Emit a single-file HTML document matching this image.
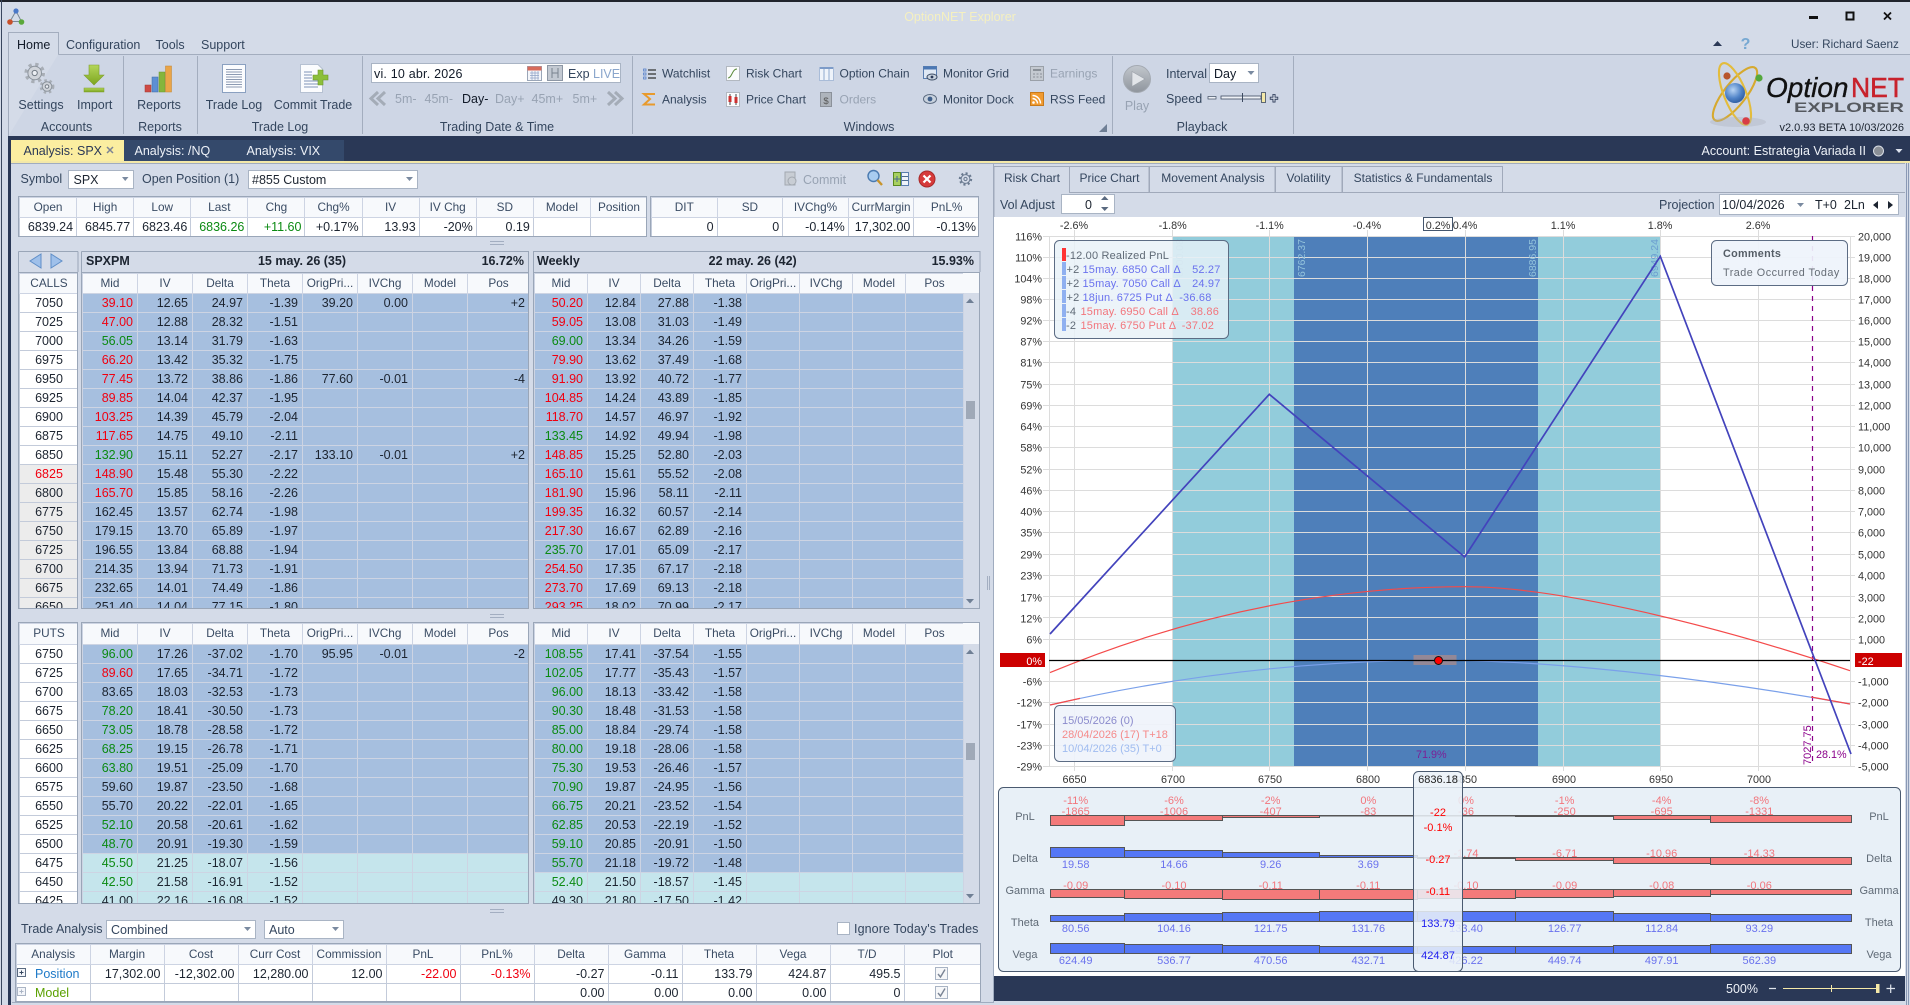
<!DOCTYPE html>
<html><head><meta charset="utf-8"><title>OptionNET Explorer</title>
<style>
html,body{margin:0;padding:0;width:1910px;height:1005px;overflow:hidden;background:#d4dbe8}
body{position:relative;font:12.5px "Liberation Sans",sans-serif}
.w{position:absolute;box-sizing:border-box;border:1px solid #9aa6b8;overflow:hidden;background:#d4dbe8}
table{border-collapse:collapse;table-layout:fixed;font-size:12.5px}
td,th{box-sizing:border-box;border:1px solid #cdd4e3;height:19px;padding:0 4px 0 0;text-align:right;overflow:hidden;white-space:nowrap;line-height:17px;color:#1c2430;background:#a6bfdf;font-weight:normal}
th{height:20px;text-align:center;background:#f7f9fc;color:#3a4c64;padding:0 0 1px;font-size:11.8px}
.h th{height:21px}
tr.t td{background:#c5e5ec}
.s td{background:#fff;text-align:center;padding:0;border-color:#c3cbda}
.s tr.y td{background:#ececec}
.p td{background:#fff;border-color:#c3cbda;padding-right:3px}
.r{color:#f00010}.g{color:#0b8a12}
td.l{text-align:left;padding-left:18px;position:relative}
svg{position:absolute;left:0;top:0}
svg text{font:12.5px "Liberation Sans",sans-serif;fill:#34465e}
svg .m{text-anchor:middle}svg .e{text-anchor:end}
svg .d{fill:#98a3b3}
svg .c text,svg text.c{font-size:10.8px;fill:#333}
svg .f text{font-size:11px}
svg .n text{font-size:12px}
svg .rd text{fill:#f2757c}svg .bl text{fill:#6a72ee}svg .gy text{fill:#5f6a76}
svg .ls text{letter-spacing:.18px}
</style></head><body>

<div class="w" style="left:18px;top:196px;width:629px;height:41px"><table class="p" style="width:628px"><col span="11" style="width:57.1px">
<tr><th>Open<th>High<th>Low<th>Last<th>Chg<th>Chg%<th>IV<th>IV Chg<th>SD<th>Model<th>Position</tr>
<tr><td>6839.24<td>6845.77<td>6823.46<td class="g">6836.26<td class="g">+11.60<td>+0.17%<td>13.93<td>-20%<td>0.19<td><td></tr></table></div>

<div class="w" style="left:650px;top:196px;width:329px;height:41px"><table class="p" style="width:328px"><col span="5" style="width:65.6px">
<tr><th>DIT<th>SD<th>IVChg%<th>CurrMargin<th>PnL%</tr>
<tr><td>0<td>0<td>-0.14%<td>17,302.00<td>-0.13%</tr></table></div>

<div class="w" style="left:18px;top:272px;width:60px;height:337px"><table class="s" style="width:59px"><col style="width:59px">
<tr><th>CALLS</tr>
<tr><td>7050</tr><tr><td>7025</tr><tr><td>7000</tr><tr><td>6975</tr><tr><td>6950</tr><tr><td>6925</tr><tr><td>6900</tr><tr><td>6875</tr><tr><td>6850</tr>
<tr class="y"><td class="r">6825</tr><tr class="y"><td>6800</tr><tr class="y"><td>6775</tr><tr class="y"><td>6750</tr><tr class="y"><td>6725</tr><tr class="y"><td>6700</tr><tr class="y"><td>6675</tr><tr class="y"><td>6650</tr></table></div>

<div class="w" style="left:81px;top:272px;width:448px;height:337px"><table style="width:447px"><col span="7" style="width:55px"><col style="width:62px">
<tr><th>Mid<th>IV<th>Delta<th>Theta<th>OrigPri...<th>IVChg<th>Model<th>Pos</tr>
<tr><td class="r">39.10<td>12.65<td>24.97<td>-1.39<td>39.20<td>0.00<td><td>+2</tr>
<tr><td class="r">47.00<td>12.88<td>28.32<td>-1.51<td><td><td><td></tr>
<tr><td class="g">56.05<td>13.14<td>31.79<td>-1.63<td><td><td><td></tr>
<tr><td class="r">66.20<td>13.42<td>35.32<td>-1.75<td><td><td><td></tr>
<tr><td class="r">77.45<td>13.72<td>38.86<td>-1.86<td>77.60<td>-0.01<td><td>-4</tr>
<tr><td class="r">89.85<td>14.04<td>42.37<td>-1.95<td><td><td><td></tr>
<tr><td class="r">103.25<td>14.39<td>45.79<td>-2.04<td><td><td><td></tr>
<tr><td class="r">117.65<td>14.75<td>49.10<td>-2.11<td><td><td><td></tr>
<tr><td class="g">132.90<td>15.11<td>52.27<td>-2.17<td>133.10<td>-0.01<td><td>+2</tr>
<tr><td class="r">148.90<td>15.48<td>55.30<td>-2.22<td><td><td><td></tr>
<tr><td class="r">165.70<td>15.85<td>58.16<td>-2.26<td><td><td><td></tr>
<tr><td>162.45<td>13.57<td>62.74<td>-1.98<td><td><td><td></tr>
<tr><td>179.15<td>13.70<td>65.89<td>-1.97<td><td><td><td></tr>
<tr><td>196.55<td>13.84<td>68.88<td>-1.94<td><td><td><td></tr>
<tr><td>214.35<td>13.94<td>71.73<td>-1.91<td><td><td><td></tr>
<tr><td>232.65<td>14.01<td>74.49<td>-1.86<td><td><td><td></tr>
<tr><td>251.40<td>14.04<td>77.15<td>-1.80<td><td><td><td></tr></table></div>

<div class="w" style="left:533px;top:272px;width:447px;height:337px"><div style="position:absolute;left:429px;top:0;width:18px;height:20px;background:#f7f9fc"></div><table style="width:429px"><col span="7" style="width:53px"><col style="width:58px">
<tr><th>Mid<th>IV<th>Delta<th>Theta<th>OrigPri...<th>IVChg<th>Model<th>Pos</tr>
<tr><td class="r">50.20<td>12.84<td>27.88<td>-1.38<td><td><td><td></tr>
<tr><td class="r">59.05<td>13.08<td>31.03<td>-1.49<td><td><td><td></tr>
<tr><td class="g">69.00<td>13.34<td>34.26<td>-1.59<td><td><td><td></tr>
<tr><td class="r">79.90<td>13.62<td>37.49<td>-1.68<td><td><td><td></tr>
<tr><td class="r">91.90<td>13.92<td>40.72<td>-1.77<td><td><td><td></tr>
<tr><td class="r">104.85<td>14.24<td>43.89<td>-1.85<td><td><td><td></tr>
<tr><td class="r">118.70<td>14.57<td>46.97<td>-1.92<td><td><td><td></tr>
<tr><td class="g">133.45<td>14.92<td>49.94<td>-1.98<td><td><td><td></tr>
<tr><td class="r">148.85<td>15.25<td>52.80<td>-2.03<td><td><td><td></tr>
<tr><td class="r">165.10<td>15.61<td>55.52<td>-2.08<td><td><td><td></tr>
<tr><td class="r">181.90<td>15.96<td>58.11<td>-2.11<td><td><td><td></tr>
<tr><td class="r">199.35<td>16.32<td>60.57<td>-2.14<td><td><td><td></tr>
<tr><td class="r">217.30<td>16.67<td>62.89<td>-2.16<td><td><td><td></tr>
<tr><td class="g">235.70<td>17.01<td>65.09<td>-2.17<td><td><td><td></tr>
<tr><td class="r">254.50<td>17.35<td>67.17<td>-2.18<td><td><td><td></tr>
<tr><td class="r">273.70<td>17.69<td>69.13<td>-2.18<td><td><td><td></tr>
<tr><td class="r">293.25<td>18.02<td>70.99<td>-2.17<td><td><td><td></tr></table></div>

<div class="w h" style="left:18px;top:622px;width:60px;height:282px"><table class="s" style="width:59px"><col style="width:59px">
<tr><th>PUTS</tr>
<tr><td>6750</tr><tr><td>6725</tr><tr><td>6700</tr><tr><td>6675</tr><tr><td>6650</tr><tr><td>6625</tr><tr><td>6600</tr><tr><td>6575</tr><tr><td>6550</tr><tr><td>6525</tr><tr><td>6500</tr><tr><td>6475</tr><tr><td>6450</tr><tr><td>6425</tr></table></div>

<div class="w h" style="left:81px;top:622px;width:448px;height:282px"><table style="width:447px"><col span="7" style="width:55px"><col style="width:62px">
<tr><th>Mid<th>IV<th>Delta<th>Theta<th>OrigPri...<th>IVChg<th>Model<th>Pos</tr>
<tr><td class="g">96.00<td>17.26<td>-37.02<td>-1.70<td>95.95<td>-0.01<td><td>-2</tr>
<tr><td class="r">89.60<td>17.65<td>-34.71<td>-1.72<td><td><td><td></tr>
<tr><td>83.65<td>18.03<td>-32.53<td>-1.73<td><td><td><td></tr>
<tr><td class="g">78.20<td>18.41<td>-30.50<td>-1.73<td><td><td><td></tr>
<tr><td class="g">73.05<td>18.78<td>-28.58<td>-1.72<td><td><td><td></tr>
<tr><td class="g">68.25<td>19.15<td>-26.78<td>-1.71<td><td><td><td></tr>
<tr><td class="g">63.80<td>19.51<td>-25.09<td>-1.70<td><td><td><td></tr>
<tr><td>59.60<td>19.87<td>-23.50<td>-1.68<td><td><td><td></tr>
<tr><td>55.70<td>20.22<td>-22.01<td>-1.65<td><td><td><td></tr>
<tr><td class="g">52.10<td>20.58<td>-20.61<td>-1.62<td><td><td><td></tr>
<tr><td class="g">48.70<td>20.91<td>-19.30<td>-1.59<td><td><td><td></tr>
<tr class="t"><td class="g">45.50<td>21.25<td>-18.07<td>-1.56<td><td><td><td></tr>
<tr class="t"><td class="g">42.50<td>21.58<td>-16.91<td>-1.52<td><td><td><td></tr>
<tr class="t"><td>41.00<td>22.16<td>-16.08<td>-1.52<td><td><td><td></tr></table></div>

<div class="w h" style="left:533px;top:622px;width:447px;height:282px"><div style="position:absolute;left:429px;top:0;width:18px;height:21px;background:#f7f9fc"></div><table style="width:429px"><col span="7" style="width:53px"><col style="width:58px">
<tr><th>Mid<th>IV<th>Delta<th>Theta<th>OrigPri...<th>IVChg<th>Model<th>Pos</tr>
<tr><td class="g">108.55<td>17.41<td>-37.54<td>-1.55<td><td><td><td></tr>
<tr><td class="g">102.05<td>17.77<td>-35.43<td>-1.57<td><td><td><td></tr>
<tr><td class="g">96.00<td>18.13<td>-33.42<td>-1.58<td><td><td><td></tr>
<tr><td class="g">90.30<td>18.48<td>-31.53<td>-1.58<td><td><td><td></tr>
<tr><td class="g">85.00<td>18.84<td>-29.74<td>-1.58<td><td><td><td></tr>
<tr><td class="g">80.00<td>19.18<td>-28.06<td>-1.58<td><td><td><td></tr>
<tr><td class="g">75.30<td>19.53<td>-26.46<td>-1.57<td><td><td><td></tr>
<tr><td class="g">70.90<td>19.87<td>-24.95<td>-1.56<td><td><td><td></tr>
<tr><td class="g">66.75<td>20.21<td>-23.52<td>-1.54<td><td><td><td></tr>
<tr><td class="g">62.85<td>20.53<td>-22.19<td>-1.52<td><td><td><td></tr>
<tr><td class="g">59.10<td>20.85<td>-20.91<td>-1.50<td><td><td><td></tr>
<tr><td class="g">55.70<td>21.18<td>-19.72<td>-1.48<td><td><td><td></tr>
<tr class="t"><td class="g">52.40<td>21.50<td>-18.57<td>-1.45<td><td><td><td></tr>
<tr class="t"><td>49.30<td>21.80<td>-17.50<td>-1.42<td><td><td><td></tr></table></div>

<div class="w" style="left:15px;top:943px;width:966px;height:59px"><table class="p" style="width:965px"><col style="width:73.5px"><col span="11" style="width:74px"><col style="width:77.5px">
<tr><th>Analysis<th>Margin<th>Cost<th>Curr Cost<th>Commission<th>PnL<th>PnL%<th>Delta<th>Gamma<th>Theta<th>Vega<th>T/D<th>Plot</tr>
<tr><td class="l" style="color:#1e7ac8">Position<td>17,302.00<td>-12,302.00<td>12,280.00<td>12.00<td class="r">-22.00<td class="r">-0.13%<td>-0.27<td>-0.11<td>133.79<td>424.87<td>495.5<td></tr>
<tr><td class="l" style="color:#5aa000">Model<td><td><td><td><td><td><td>0.00<td>0.00<td>0.00<td>0.00<td>0<td></tr></table></div>

<svg width="1910" height="1005" viewBox="0 0 1910 1005">
<defs>
<linearGradient id="ga" x1="0" y1="0" x2="0" y2="1"><stop offset="0" stop-color="#b4d65a"/><stop offset="1" stop-color="#7ca51e"/></linearGradient>
<linearGradient id="gp" x1="0" y1="0" x2="0" y2="1"><stop offset="0" stop-color="#c2c7cd"/><stop offset="1" stop-color="#8f959d"/></linearGradient>
<radialGradient id="gs" cx=".4" cy=".35" r=".7"><stop offset="0" stop-color="#b8d4f4"/><stop offset=".6" stop-color="#4f83c8"/><stop offset="1" stop-color="#2c5a9c"/></radialGradient>
</defs>

<!-- window frame -->
<rect x="0" y="0" width="1910" height="2" fill="#20242c"/>
<rect x="1" y="0" width="1" height="1005" fill="#39465e"/>
<rect x="8" y="55" width="1902" height="81" fill="#ced6e5"/>
<path d="M58 54.5H1910" stroke="#a3adbe" fill="none"/>
<path d="M8.5 136V32.5H58.5V54" stroke="#a3adbe" fill="#d4dbe8"/>
<path d="M123.5 56V134M197.5 56V134M362.5 56V134M632.5 56V134M1112.5 56V134M1293.5 56V134" stroke="#a3adbe" fill="none"/>
<rect x="8" y="136" width="1902" height="25" fill="#2a3856"/>
<rect x="8" y="161" width="1902" height="2" fill="#f3e8a8"/>
<rect x="8" y="136" width="3" height="869" fill="#2a3856"/>
<rect x="1906" y="163" width="1" height="842" fill="#8a99b5"/>
<rect x="1908" y="163" width="1" height="842" fill="#8a99b5"/>
<path d="M11 163.5H1905M993.5 163V1003M12 1002.5H993" stroke="#a0acbf" fill="none"/>

<!-- title -->
<g stroke="#7a8794" stroke-width="1" fill="none"><path d="M16 11L10 21.5H21.5Z"/></g>
<circle cx="16" cy="11" r="2.6" fill="#4a78c8"/><circle cx="10" cy="22" r="2.8" fill="#c8502a"/><circle cx="21.5" cy="22" r="2.8" fill="#5aa83a"/>
<text x="960" y="21" class="m" style="fill:#f5f0c0;font-size:12.5px">OptionNET Explorer</text>
<rect x="1809" y="16" width="9" height="3" fill="#111"/>
<rect x="1846.5" y="12.5" width="7" height="7" fill="none" stroke="#111" stroke-width="2"/>
<path d="M1884 12.5L1891 19.5M1891 12.5L1884 19.5" stroke="#111" stroke-width="1.8"/>
<text x="17" y="49" style="fill:#111a28">Home</text><text x="66" y="49">Configuration</text><text x="155.5" y="49">Tools</text><text x="201" y="49">Support</text>
<path d="M1713 46L1717.5 41L1722 46Z" fill="#2a3856"/>
<text x="1745.5" y="49" class="m" style="font-size:16px;font-weight:bold;fill:#76a8d2">?</text>
<text x="1791" y="48" style="font-size:11.7px">User: Richard Saenz</text>

<!-- settings icon -->
<g><circle cx="34.7" cy="73" r="8.6" fill="none" stroke="#a8aeb6" stroke-width="3.4" stroke-dasharray="3.2 3.6"/><circle cx="34.7" cy="73" r="6.8" fill="#d0d4da" stroke="#8c949d"/><circle cx="34.7" cy="73" r="2.6" fill="#eceff3" stroke="#737b85"/>
<circle cx="47" cy="86.5" r="6" fill="none" stroke="#a8aeb6" stroke-width="2.8" stroke-dasharray="2.4 2.7"/><circle cx="47" cy="86.5" r="4.8" fill="#d0d4da" stroke="#8c949d"/><circle cx="47" cy="86.5" r="1.8" fill="#eceff3" stroke="#737b85"/></g>
<!-- import -->
<path d="M89 65H99V75H104L94 85L84 75H89Z" fill="url(#ga)" stroke="#7d9d2a" stroke-width=".6"/>
<rect x="84" y="88" width="20" height="4" fill="url(#ga)" stroke="#7d9d2a" stroke-width=".5"/>
<!-- reports -->
<rect x="145" y="85" width="6" height="7" fill="#cf4a44" stroke="#9b3a34" stroke-width=".5"/>
<rect x="152" y="77" width="6" height="15" fill="#5d8fd4" stroke="#3f6aa6" stroke-width=".5"/>
<rect x="159" y="72" width="6" height="20" fill="#85b53c" stroke="#6b962c" stroke-width=".5"/>
<rect x="165.5" y="66" width="6" height="26" fill="#eaa548" stroke="#c2842e" stroke-width=".5"/>
<!-- trade log -->
<rect x="222.5" y="64.5" width="23" height="28" fill="#fbfcfe" stroke="#8aa0c0"/>
<path d="M226 69.5H242M226 72H242M226 74.5H242M226 77H242M226 79.5H242M226 82H242M226 84.5H242M226 87H242" stroke="#8c9ab2"/>
<!-- commit -->
<path d="M300.5 64.5H318L322.5 69V92.5H300.5Z" fill="#fbfcfe" stroke="#b6c1d2"/>
<path d="M304 72H312M304 75H312M304 78H312M304 81H318M304 84H318M304 87H318" stroke="#7f93b8"/>
<path d="M318 70h5v5h5v5h-5v5h-5v-5h-5v-5h5Z" fill="#8cbf3a" stroke="#6a962a" stroke-width=".6"/>

<g class="l">
<text x="41" y="109" class="m">Settings</text><text x="94.7" y="109" class="m">Import</text><text x="159" y="109" class="m">Reports</text><text x="234" y="109" class="m">Trade Log</text><text x="313" y="109" class="m">Commit Trade</text>
<text x="66.5" y="131" class="m">Accounts</text><text x="160" y="131" class="m">Reports</text><text x="280" y="131" class="m">Trade Log</text><text x="497" y="131" class="m">Trading Date &amp; Time</text><text x="869" y="131" class="m">Windows</text><text x="1202" y="131" class="m">Playback</text>
</g>

<!-- date -->
<rect x="371.5" y="63.5" width="249" height="19" fill="#fff" stroke="#a9b4c4"/>
<text x="374" y="78" style="fill:#111a28;letter-spacing:.2px">vi. 10 abr. 2026</text>
<rect x="527.5" y="66.5" width="14" height="14" fill="#f4f6fa" stroke="#9aa6b8"/><rect x="527.5" y="66.5" width="14" height="4" fill="#d86a5a"/>
<path d="M530 73H539M530 75.5H539M530 78H539M532 71V80M535 71V80M538 71V80" stroke="#8ea3c6" stroke-width=".7"/>
<rect x="547.5" y="65.5" width="15" height="15" fill="#c3c9d2" stroke="#8d97a5"/>
<path d="M552 68V78M558 68V78M552 73H558" stroke="#79828f"/>
<text x="568" y="78">Exp</text><text x="593" y="78" style="fill:#8aa6cc">LIVE</text>
<path d="M378 92L371 98.5L378 105M385 92L378 98.5L385 105" stroke="#a4acb7" stroke-width="3" fill="none"/>
<path d="M608 92L615 98.5L608 105M615 92L622 98.5L615 105" stroke="#a4acb7" stroke-width="3" fill="none"/>
<g class="d"><text x="395" y="103" class="d">5m-</text><text x="424.5" y="103" class="d">45m-</text><text x="495" y="103" class="d">Day+</text><text x="531.5" y="103" class="d">45m+</text><text x="572.5" y="103" class="d">5m+</text></g>
<text x="462" y="103" style="fill:#111a28">Day-</text>

<!-- windows group -->
<path d="M648 70H656M648 74H656M648 78H656" stroke="#333" stroke-width="1.2"/><path d="M643.5 69H646V71H643.5ZM643.5 73H646V75H643.5ZM643.5 77H646V79H643.5Z" fill="none" stroke="#4a78c8" stroke-width=".7"/>
<path d="M655 94H644L650 99L644 104.5H655" fill="none" stroke="#e89a2c" stroke-width="2"/>
<rect x="726.5" y="66.5" width="13" height="14" fill="#fafbfd" stroke="#b2b8c0"/><path d="M728 78C732 78 732 69 737 69" stroke="#5a8a3a" fill="none"/>
<rect x="726.5" y="92.5" width="13" height="14" fill="#fafbfd" stroke="#b2b8c0"/><path d="M730 94V105M736 94V105" stroke="#444"/><rect x="728.5" y="96" width="3" height="6" fill="#cc3030"/><rect x="734.5" y="97" width="3" height="6" fill="#cc3030"/>
<rect x="819.5" y="67.5" width="14" height="13" fill="#eef3fa" stroke="#a9bcd8"/><path d="M824 68V80M829 68V80" stroke="#8ea9cf"/><path d="M820 68H833" stroke="#7d9bc8" stroke-width="2"/>
<rect x="820.5" y="92.5" width="11" height="14" fill="#aeb4bc" stroke="#8b919a"/><text x="826" y="104" class="m" style="font-size:9.5px;fill:#555">$</text>
<rect x="923.5" y="66.5" width="13" height="12" fill="#dfe8f4" stroke="#5a7eb0"/><rect x="923.5" y="66.5" width="13" height="3" fill="#4c78b4"/><ellipse cx="932" cy="77" rx="5" ry="3" fill="#c8d2de" stroke="#3e4e66"/><circle cx="932" cy="77" r="1.4" fill="#2a3856"/>
<ellipse cx="930" cy="99" rx="6.5" ry="4.5" fill="#c8d2de" stroke="#5a6a80"/><circle cx="930" cy="99" r="2.4" fill="#3f5f8a"/>
<rect x="1030.5" y="66.5" width="13" height="14" fill="#c4c9d0" stroke="#9aa0a8"/><path d="M1033 70H1041" stroke="#8a9098" stroke-width="2"/><path d="M1033 74h2m1.5 0h2m1.5 0h2M1033 77h2m1.5 0h2m1.5 0h2" stroke="#8a9098"/>
<rect x="1030.5" y="92.5" width="13" height="13" fill="#f09a30" stroke="#c87a1a"/><circle cx="1033.5" cy="102.5" r="1.3" fill="#fff"/><path d="M1032.5 98.5A5 5 0 0 1 1037.5 103.5M1032.5 95.5A8 8 0 0 1 1040.5 103.5" stroke="#fff" stroke-width="1.4" fill="none"/>
<g class="n"><text x="662" y="77.5">Watchlist</text><text x="662" y="103.5">Analysis</text><text x="746" y="77.5">Risk Chart</text><text x="746" y="103.5">Price Chart</text><text x="839.5" y="77.5">Option Chain</text><text x="839.5" y="103.5" class="d">Orders</text><text x="943" y="77.5">Monitor Grid</text><text x="943" y="103.5">Monitor Dock</text><text x="1050" y="77.5" class="d">Earnings</text><text x="1050" y="103.5">RSS Feed</text></g>
<path d="M1107 124V132H1099Z" fill="#6f7f95"/>

<!-- playback -->
<circle cx="1137" cy="79" r="13.5" fill="url(#gp)" stroke="#a4aab2"/><path d="M1132 71.5L1145 79L1132 86.5Z" fill="#e2e5e9" stroke="#9aa0a8" stroke-width=".6"/>
<text x="1137" y="110" class="m d">Play</text>
<text x="1166" y="78">Interval</text><text x="1166" y="103">Speed</text>
<rect x="1209.5" y="63.5" width="49" height="19" fill="#fff" stroke="#a9b4c4"/><text x="1214" y="78" style="fill:#111a28">Day</text><path d="M1247.5 71H1254.5L1251 75Z" fill="#7a8aa0"/>
<rect x="1208" y="96.5" width="8" height="2.5" fill="#eef1f6" stroke="#3c4a60" stroke-width=".7"/>
<rect x="1221" y="96" width="40" height="3" fill="#eef1f6" stroke="#3c4a60" stroke-width=".8"/>
<path d="M1242.5 93V102" stroke="#3c4a60"/><rect x="1261.5" y="92.5" width="4" height="10" fill="#f3e8a8" stroke="#3c4a60" stroke-width=".8"/>
<path d="M1274 94V102.5M1269.8 98.2H1278.2" stroke="#2a3856" stroke-width="3"/><path d="M1274 94.8V101.6M1270.6 98.2H1277.4" stroke="#dfe5ef" stroke-width="1.2"/>

<!-- logo -->
<g fill="none" stroke-width="2.1">
<ellipse cx="1735" cy="94" rx="33" ry="11" transform="rotate(-52 1735 94)" stroke="#d6a92e"/>
<ellipse cx="1735" cy="94" rx="33" ry="11" transform="rotate(68 1735 94)" stroke="#e3bc3c"/>
</g>
<ellipse cx="1738" cy="122" rx="28" ry="5" fill="#aab0ba" opacity=".35"/>
<circle cx="1735" cy="93" r="10" fill="url(#gs)"/>
<circle cx="1727" cy="76" r="3.6" fill="#b8552c"/><circle cx="1759" cy="78" r="3.6" fill="#54a83c"/><circle cx="1746" cy="121" r="3.8" fill="#d83c44"/>
<text x="1766" y="97" style="font-size:28px;font-style:italic;fill:#111;stroke:#111;stroke-width:.35">Option</text>
<text x="1851" y="97" textLength="53" lengthAdjust="spacingAndGlyphs" style="font-size:28px;fill:#c8222c;stroke:#c8222c;stroke-width:.5">NET</text>
<text x="1794" y="112" textLength="110" lengthAdjust="spacingAndGlyphs" style="font-size:14px;font-weight:bold;fill:#55595f">EXPLORER</text>
<text x="1904" y="131" class="e" style="font-size:11px;fill:#1c2430">v2.0.93 BETA 10/03/2026</text>

<!-- doc tabs -->
<rect x="11" y="140" width="113" height="21" fill="#fbeea0"/>
<rect x="124" y="140" width="220" height="21" fill="#34496b"/>
<text x="23.5" y="155" style="fill:#2a3856">Analysis: SPX</text>
<path d="M107 147L113 153M113 147L107 153" stroke="#7d8494" stroke-width="1.5"/>
<text x="134.5" y="155" style="fill:#eef2f8">Analysis: /NQ</text><text x="246.5" y="155" style="fill:#eef2f8">Analysis: VIX</text>
<text x="1701.5" y="155" style="fill:#eef2f8">Account: Estrategia Variada II</text>
<circle cx="1878.5" cy="151" r="5" fill="#8a8f96" stroke="#d8dde4"/>
<path d="M1895.5 149H1902.5L1899 153Z" fill="#dde3ee"/>

<!-- symbol row -->
<text x="20.5" y="183">Symbol</text>
<rect x="68.5" y="170.5" width="65" height="18" fill="#fff" stroke="#a9b4c4"/><text x="73.5" y="184" style="fill:#1c2430">SPX</text><path d="M122 177H128.5L125.2 181Z" fill="#7a8aa0"/>
<text x="142" y="183">Open Position (1)</text>
<rect x="248.5" y="170.5" width="169" height="18" fill="#fff" stroke="#a9b4c4"/><text x="252" y="184" style="fill:#1c2430">#855 Custom</text><path d="M406 177H413L409.5 181Z" fill="#7a8aa0"/>
<rect x="785" y="172" width="10" height="13" fill="#c8cdd4" stroke="#a2a8b0"/><circle cx="792" cy="181" r="4" fill="#c8cdd4" stroke="#a2a8b0"/>
<text x="803" y="184" class="d">Commit</text>
<circle cx="873.5" cy="176" r="5.5" fill="#a8ccf0" stroke="#4a7ab0" stroke-width="1.4"/><path d="M877.5 180L882 185" stroke="#c8942c" stroke-width="2.4"/>
<rect x="893.5" y="172.5" width="7" height="13" fill="#a8d060" stroke="#5a8a20"/><rect x="901.5" y="172.5" width="7" height="13" fill="#eef3fa" stroke="#5a7eb0"/><path d="M902 176.5H908M902 180.5H908M894 179H900M897 176V182" stroke="#4a6a90"/>
<circle cx="927" cy="179" r="8" fill="#d63a3a" stroke="#a82a2a"/><path d="M923.5 175.5L930.5 182.5M930.5 175.5L923.5 182.5" stroke="#fff" stroke-width="2.2"/>
<circle cx="965.5" cy="179" r="5.5" fill="none" stroke="#6a7a90" stroke-width="2.4" stroke-dasharray="2 2.3"/><circle cx="965.5" cy="179" r="4.4" fill="#d4dbe8" stroke="#6a7a90"/><circle cx="965.5" cy="179" r="1.6" fill="none" stroke="#6a7a90"/>

<!-- splitters -->
<g fill="#8f9bb0"><path d="M490 241h14v1h-14zM490 244h14v1h-14zM490 614h14v1h-14zM490 617h14v1h-14zM490 909h14v1h-14zM490 912h14v1h-14z" opacity=".7"/><path d="M987 576h1v14h-1zM989 576h1v14h-1z" opacity=".7"/></g>

<!-- option panel headers -->
<path d="M41 254V268L30 261Z" fill="#9fc0ea" stroke="#5f8ec8"/><path d="M51 254V268L62 261Z" fill="#9fc0ea" stroke="#5f8ec8"/>
<text x="86" y="265" style="font-weight:bold;fill:#1c2430">SPXPM</text><text x="302" y="265" class="m" style="font-weight:bold;fill:#1c2430">15 may. 26 (35)</text><text x="524" y="265" class="e" style="font-weight:bold;fill:#1c2430">16.72%</text>
<text x="537" y="265" style="font-weight:bold;fill:#1c2430">Weekly</text><text x="752.7" y="265" class="m" style="font-weight:bold;fill:#1c2430">22 may. 26 (42)</text><text x="974" y="265" class="e" style="font-weight:bold;fill:#1c2430">15.93%</text>
<path d="M18.5 251.5H78M81.5 251.5H528.5V272M533 251.5H980V272M81.5 251.5V272M18.5 251.5V272M533.5 251.5V272M78 251.5V272" stroke="#9aa6b8" fill="none"/>
<g fill="#6f7f95"><path d="M966 303L970 298.5L974 303Z"/><path d="M966 599L970 603.5L974 599Z"/><path d="M966 654L970 649.5L974 654Z"/><path d="M966 894L970 898.5L974 894Z"/></g>
<rect x="966" y="401" width="9" height="18" fill="#9fa9b8"/><rect x="966" y="743" width="9" height="17" fill="#9fa9b8"/>

<!-- trade analysis -->
<text x="21" y="933">Trade Analysis</text>
<rect x="106.5" y="920.5" width="149" height="18" fill="#fff" stroke="#a9b4c4"/><text x="111" y="934" style="fill:#34465e">Combined</text><path d="M244 927H251L247.5 931Z" fill="#7a8aa0"/>
<rect x="264.5" y="920.5" width="79" height="18" fill="#fff" stroke="#a9b4c4"/><text x="269" y="934" style="fill:#34465e">Auto</text><path d="M332 927H339L335.5 931Z" fill="#7a8aa0"/>
<rect x="837.5" y="922.5" width="12" height="12" fill="#fff" stroke="#a9b4c4"/><text x="854" y="933" style="letter-spacing:.1px">Ignore Today's Trades</text>
<rect x="17.5" y="968.5" width="8" height="8" fill="#f4f6fa" stroke="#5a6a80"/><path d="M19.5 972.5H23.5M21.5 970.5V974.5" stroke="#34465e"/>
<rect x="17.5" y="987.5" width="8" height="8" fill="#f4f6fa" stroke="#aab4c4"/><path d="M19.5 991.5H23.5M21.5 989.5V993.5" stroke="#aab4c4"/>
<rect x="935.5" y="967.5" width="12" height="12" fill="#f6f7f9" stroke="#a9b4c4"/><path d="M938 974L940.5 977L945 969.5" stroke="#7a8494" stroke-width="1.4" fill="none"/>
<rect x="935.5" y="986.5" width="12" height="12" fill="#f6f7f9" stroke="#a9b4c4"/><path d="M938 993L940.5 996L945 988.5" stroke="#7a8494" stroke-width="1.4" fill="none"/>

<!-- right panel tabs -->
<path d="M994 217V166.5H1069.5V192.5H1905" stroke="#a0a9ba" fill="none"/>
<rect x="1069.5" y="166.5" width="79.5" height="26" fill="#d4dbe8" stroke="#a0a9ba"/><rect x="1149.5" y="166.5" width="125.5" height="26" fill="#d4dbe8" stroke="#a0a9ba"/><rect x="1275.5" y="166.5" width="66.5" height="26" fill="#d4dbe8" stroke="#a0a9ba"/><rect x="1342.5" y="166.5" width="160" height="26" fill="#d4dbe8" stroke="#a0a9ba"/>
<g class="n"><text x="1032" y="182" class="m">Risk Chart</text><text x="1109.5" y="182" class="m">Price Chart</text><text x="1213" y="182" class="m">Movement Analysis</text><text x="1308.5" y="182" class="m">Volatility</text><text x="1423" y="182" class="m">Statistics &amp; Fundamentals</text></g>
<text x="1000" y="209">Vol Adjust</text>
<rect x="1061.5" y="194.5" width="53" height="19" fill="#fff" stroke="#a9b4c4"/><text x="1092" y="209" class="e" style="fill:#1c2430">0</text>
<path d="M1101 200L1104.7 196L1108.5 200ZM1101 207L1104.7 211L1108.5 207Z" fill="#5a6a80"/>
<text x="1659" y="209">Projection</text>
<rect x="1719.5" y="194.5" width="179" height="20" fill="#fff" stroke="#a9b4c4"/><text x="1722" y="209" style="fill:#1c2430">10/04/2026</text>
<path d="M1797 203H1804L1800.5 207Z" fill="#7a8aa0"/><text x="1815" y="209" style="fill:#1c2430">T+0</text><text x="1844" y="209" style="fill:#1c2430">2Ln</text>
<path d="M1878 201V209L1873 205ZM1888 201V209L1893 205Z" fill="#1c2430"/>

<!-- chart -->
<rect x="994" y="217" width="911" height="759" fill="#fff"/>
<rect x="1172.7" y="236" width="487.6" height="530" fill="#92ccdb"/>
<rect x="1294" y="236" width="244" height="530" fill="#4e7fba"/>
<path d="M1043 236.5H1855M1043 257.5H1855M1043 278.5H1855M1043 299.5H1855M1043 320.5H1855M1043 341.5H1855M1043 362.5H1855M1043 384.5H1855M1043 405.5H1855M1043 426.5H1855M1043 447.5H1855M1043 469.5H1855M1043 490.5H1855M1043 511.5H1855M1043 532.5H1855M1043 554.5H1855M1043 575.5H1855M1043 596.5H1855M1043 617.5H1855M1043 639.5H1855M1043 681.5H1855M1043 702.5H1855M1043 724.5H1855M1043 745.5H1855M1043 766.5H1855M1049.5 236V766M1850.5 236V766M1074.5 230V771M1172.5 230V771M1269.5 230V771M1367.5 230V771M1465.5 230V771M1563.5 230V771M1660.5 230V771M1758.5 230V771" stroke="#dcdcdc" fill="none" stroke-width="1"/>
<text transform="translate(1183,277) rotate(-90)" style="font-size:10.5px;fill:#7fb8ce">6700.08</text>
<text transform="translate(1305,277) rotate(-90)" style="font-size:10.5px;fill:#93c3dc">6762.37</text>
<text transform="translate(1536,277) rotate(-90)" style="font-size:10.5px;fill:#93c3dc">6886.95</text>
<text transform="translate(1658,277) rotate(-90)" style="font-size:10.5px;fill:#6c9fd0">6949.24</text>
<path d="M1812.5 236V766" stroke="#8b008b" stroke-width="1.2" stroke-dasharray="5 5" fill="none"/>
<path d="M1050 672.6Q1257.5 586.7 1465 586.7C1560 586.7 1720 626.7 1850 670.7" fill="none" stroke="#f44a4a" stroke-width="1.2"/>
<path d="M1050 705Q1245 660.3 1440 660.3C1560 660.3 1720 680.6 1850 704" fill="none" stroke="#7aa0ea" stroke-width="1.2"/>
<path d="M1050 705L1080 698.4M1811 697L1850 704" fill="none" stroke="#f44a4a" stroke-width="1.3"/>
<rect x="1413.5" y="655" width="43" height="10" fill="#a08a90" opacity=".85"/>
<path d="M1049 660.5H1850" stroke="#000" stroke-width="1.2"/>
<polyline points="1050,634 1269.3,394.3 1464.7,557 1660.3,256.3 1851,754" fill="none" stroke="#4343bc" stroke-width="1.7"/>
<circle cx="1438.5" cy="660.5" r="4" fill="#f00" stroke="#111"/>

<g class="c" transform="translate(0,.7)">
<text x="1042" y="240" class="e">116%</text><text x="1042" y="261" class="e">110%</text><text x="1042" y="282" class="e">104%</text><text x="1042" y="303" class="e">98%</text><text x="1042" y="324" class="e">92%</text><text x="1042" y="345" class="e">87%</text><text x="1042" y="366" class="e">81%</text><text x="1042" y="388" class="e">75%</text><text x="1042" y="409" class="e">69%</text><text x="1042" y="430" class="e">64%</text><text x="1042" y="451" class="e">58%</text><text x="1042" y="473" class="e">52%</text><text x="1042" y="494" class="e">46%</text><text x="1042" y="515" class="e">40%</text><text x="1042" y="536" class="e">35%</text><text x="1042" y="558" class="e">29%</text><text x="1042" y="579" class="e">23%</text><text x="1042" y="601" class="e">17%</text><text x="1042" y="622" class="e">12%</text><text x="1042" y="643" class="e">6%</text><text x="1042" y="685" class="e">-6%</text><text x="1042" y="706" class="e">-12%</text><text x="1042" y="728" class="e">-17%</text><text x="1042" y="749" class="e">-23%</text><text x="1042" y="770" class="e">-29%</text>
<text x="1858" y="240">20,000</text><text x="1858" y="261">19,000</text><text x="1858" y="282">18,000</text><text x="1858" y="303">17,000</text><text x="1858" y="324">16,000</text><text x="1858" y="345">15,000</text><text x="1858" y="366">14,000</text><text x="1858" y="388">13,000</text><text x="1858" y="409">12,000</text><text x="1858" y="430">11,000</text><text x="1858" y="451">10,000</text><text x="1858" y="473">9,000</text><text x="1858" y="494">8,000</text><text x="1858" y="515">7,000</text><text x="1858" y="536">6,000</text><text x="1858" y="558">5,000</text><text x="1858" y="579">4,000</text><text x="1858" y="601">3,000</text><text x="1858" y="622">2,000</text><text x="1858" y="643">1,000</text><text x="1858" y="685">-1,000</text><text x="1858" y="706">-2,000</text><text x="1858" y="728">-3,000</text><text x="1858" y="749">-4,000</text><text x="1858" y="770">-5,000</text>
</g>
<g class="c">
<text x="1074" y="229" class="m">-2.6%</text><text x="1172.7" y="229" class="m">-1.8%</text><text x="1269.7" y="229" class="m">-1.1%</text><text x="1367" y="229" class="m">-0.4%</text><text x="1465" y="229" class="m">0.4%</text><text x="1563" y="229" class="m">1.1%</text><text x="1660" y="229" class="m">1.8%</text><text x="1758" y="229" class="m">2.6%</text>
<text x="1074.5" y="783" class="m">6650</text><text x="1173" y="783" class="m">6700</text><text x="1270" y="783" class="m">6750</text><text x="1368" y="783" class="m">6800</text><text x="1465" y="783" class="m">6850</text><text x="1564" y="783" class="m">6900</text><text x="1661" y="783" class="m">6950</text><text x="1759" y="783" class="m">7000</text>
</g>
<rect x="1423.5" y="217.5" width="29" height="13" fill="#fff" stroke="#44566e"/><text x="1438" y="229" class="m c">0.2%</text>
<rect x="1000" y="653" width="45" height="14" fill="#cc0000"/><text x="1042" y="665" class="e" style="font-size:10.8px;fill:#fff">0%</text>
<rect x="1855" y="653" width="47" height="14" fill="#cc0000"/><text x="1858" y="665" style="font-size:10.8px;fill:#fff">-22</text>
<text x="1416" y="758" style="font-size:10.8px;fill:#8b008b;opacity:.75">71.9%</text>
<text x="1816" y="758" style="font-size:10.8px;fill:#8b008b">28.1%</text>
<text transform="translate(1811,765) rotate(-90)" style="font-size:11px;fill:#8b008b">7027.75</text>

<!-- legends -->
<rect x="1054.5" y="240.5" width="174" height="98" rx="5" fill="#e8f1f8" fill-opacity=".82" stroke="#5c6c84"/>
<rect x="1062" y="248" width="4" height="13" fill="#f33"/><rect x="1062" y="262" width="4" height="13" fill="#8fb0f0"/><rect x="1062" y="276" width="4" height="13" fill="#8fb0f0"/><rect x="1062" y="290" width="4" height="13" fill="#8fb0f0"/><rect x="1062" y="304" width="4" height="13" fill="#8fb0f0"/><rect x="1062" y="318" width="4" height="13" fill="#8fb0f0"/>
<g class="f gy ls"><text x="1066" y="259">-12.00 Realized PnL</text><text x="1066.5" y="273">+2</text><text x="1066.5" y="287">+2</text><text x="1066.5" y="301">+2</text><text x="1066" y="315">-4</text><text x="1066" y="329">-2</text></g>
<g class="f bl ls"><text x="1082.5" y="273">15may. 6850 Call Δ</text><text x="1220.5" y="273" class="e">52.27</text><text x="1082.5" y="287">15may. 7050 Call Δ</text><text x="1220.5" y="287" class="e">24.97</text><text x="1082.5" y="301">18jun. 6725 Put Δ</text><text x="1211.5" y="301" class="e">-36.68</text></g>
<g class="f rd ls"><text x="1080.5" y="315">15may. 6950 Call Δ</text><text x="1219" y="315" class="e">38.86</text><text x="1080.5" y="329">15may. 6750 Put Δ</text><text x="1214" y="329" class="e">-37.02</text></g>

<rect x="1711.5" y="240.5" width="136" height="45" rx="5" fill="#eef3fb" fill-opacity=".92" stroke="#5c6c84"/>
<text x="1723" y="257" style="font-size:10.8px;font-weight:bold;fill:#555d66;letter-spacing:.3px">Comments</text>
<text x="1723" y="276" style="font-size:10.8px;fill:#666d76;letter-spacing:.5px">Trade Occurred Today</text>

<rect x="1054.5" y="705.5" width="121" height="56" rx="5" fill="#eef3fb" fill-opacity=".9" stroke="#5c6c84"/>
<g class="f"><text x="1062" y="724" style="fill:#8a8acc">15/05/2026 (0)</text><text x="1062" y="738" style="fill:#f58a8a">28/04/2026 (17) T+18</text><text x="1062" y="752" style="fill:#a0bcf0">10/04/2026 (35) T+0</text></g>

<!-- lower panel -->
<rect x="998.5" y="787.5" width="902" height="184" rx="5" fill="#e8f0f7" stroke="#4a5a70"/>
<path fill="#f47a7a" stroke="#555" d="M1050.5 815.5h74v10h-74zM1124.5 815.5h98v5h-98zM1222.5 815.5h97v2h-97zM1319.5 815.5h98v.5h-98zM1417.5 815.5h98v.5h-98zM1515.5 815.5h98v1h-98zM1613.5 815.5h97v4h-97zM1710.5 815.5h141v7h-141zM1417.5 857.5h98v1h-98zM1515.5 857.5h98v3h-98zM1613.5 857.5h97v6h-97zM1710.5 857.5h141v7h-141zM1050.5 889.5h74v8h-74zM1124.5 889.5h98v9h-98zM1222.5 889.5h97v10h-97zM1319.5 889.5h98v10h-98zM1417.5 889.5h98v9h-98zM1515.5 889.5h98v8h-98zM1613.5 889.5h97v7h-97zM1710.5 889.5h141v5h-141z"/>
<path fill="#5577f5" stroke="#555" d="M1050.5 847.5h74v10h-74zM1124.5 850.5h98v7h-98zM1222.5 852.5h97v5h-97zM1319.5 855.5h98v2h-98zM1050.5 915.5h74v6h-74zM1124.5 913.5h98v8h-98zM1222.5 912.5h97v9h-97zM1319.5 911.5h98v10h-98zM1417.5 911.5h98v10h-98zM1515.5 911.5h98v10h-98zM1613.5 913.5h97v8h-97zM1710.5 914.5h141v7h-141zM1050.5 943.5h74v10h-74zM1124.5 944.5h98v9h-98zM1222.5 945.5h97v8h-97zM1319.5 946.5h98v7h-98zM1417.5 946.5h98v7h-98zM1515.5 946.5h98v7h-98zM1613.5 945.5h97v8h-97zM1710.5 944.5h141v9h-141z"/>
<g class="f gy"><text x="1025" y="820" class="m">PnL</text><text x="1025" y="862" class="m">Delta</text><text x="1025" y="894" class="m">Gamma</text><text x="1025" y="926" class="m">Theta</text><text x="1025" y="958" class="m">Vega</text><text x="1879" y="820" class="m">PnL</text><text x="1879" y="862" class="m">Delta</text><text x="1879" y="894" class="m">Gamma</text><text x="1879" y="926" class="m">Theta</text><text x="1879" y="958" class="m">Vega</text></g>
<g class="f rd">
<text x="1075.7" y="804" class="m">-11%</text><text x="1174" y="804" class="m">-6%</text><text x="1270.7" y="804" class="m">-2%</text><text x="1368.3" y="804" class="m">0%</text><text x="1466" y="804" class="m">0%</text><text x="1564.7" y="804" class="m">-1%</text><text x="1661.7" y="804" class="m">-4%</text><text x="1759.3" y="804" class="m">-8%</text>
<text x="1075.7" y="815" class="m">-1865</text><text x="1174" y="815" class="m">-1006</text><text x="1270.7" y="815" class="m">-407</text><text x="1368.3" y="815" class="m">-83</text><text x="1466" y="815" class="m">-36</text><text x="1564.7" y="815" class="m">-250</text><text x="1661.7" y="815" class="m">-695</text><text x="1759.3" y="815" class="m">-1331</text>
<text x="1466" y="857" class="m">-1.74</text><text x="1564.7" y="857" class="m">-6.71</text><text x="1661.7" y="857" class="m">-10.96</text><text x="1759.3" y="857" class="m">-14.33</text>
<text x="1075.7" y="889" class="m">-0.09</text><text x="1174" y="889" class="m">-0.10</text><text x="1270.7" y="889" class="m">-0.11</text><text x="1368.3" y="889" class="m">-0.11</text><text x="1466" y="889" class="m">-0.10</text><text x="1564.7" y="889" class="m">-0.09</text><text x="1661.7" y="889" class="m">-0.08</text><text x="1759.3" y="889" class="m">-0.06</text>
</g>
<g class="f bl">
<text x="1075.7" y="868" class="m">19.58</text><text x="1174" y="868" class="m">14.66</text><text x="1270.7" y="868" class="m">9.26</text><text x="1368.3" y="868" class="m">3.69</text>
<text x="1075.7" y="932" class="m">80.56</text><text x="1174" y="932" class="m">104.16</text><text x="1270.7" y="932" class="m">121.75</text><text x="1368.3" y="932" class="m">131.76</text><text x="1466" y="932" class="m">133.40</text><text x="1564.7" y="932" class="m">126.77</text><text x="1661.7" y="932" class="m">112.84</text><text x="1759.3" y="932" class="m">93.29</text>
<text x="1075.7" y="964" class="m">624.49</text><text x="1174" y="964" class="m">536.77</text><text x="1270.7" y="964" class="m">470.56</text><text x="1368.3" y="964" class="m">432.71</text><text x="1466" y="964" class="m">426.22</text><text x="1564.7" y="964" class="m">449.74</text><text x="1661.7" y="964" class="m">497.91</text><text x="1759.3" y="964" class="m">562.39</text>
</g>
<rect x="1413.5" y="771.5" width="49" height="200" rx="5" fill="#eaf1f8" fill-opacity=".86" stroke="#4a5a70"/>
<g class="f">
<text x="1438" y="783" class="m" style="fill:#222">6836.18</text>
<text x="1438" y="816" class="m" style="fill:#f00">-22</text><text x="1438" y="831" class="m" style="fill:#f00">-0.1%</text><text x="1438" y="863" class="m" style="fill:#f00">-0.27</text><text x="1438" y="895" class="m" style="fill:#f00">-0.11</text>
<text x="1438" y="927" class="m" style="fill:#1c1cf0">133.79</text><text x="1438" y="959" class="m" style="fill:#1c1cf0">424.87</text>
</g>

<!-- bottom bar -->
<rect x="994" y="976" width="911" height="25" fill="#2a3856"/>
<text x="1726" y="993" style="fill:#eef2f8;font-size:12.5px">500%</text>
<path d="M1769 988.5H1776M1886.5 988.5H1895M1890.7 984.5V993" stroke="#dfe4ec" stroke-width="1.2"/>
<path d="M1783 988.5H1878M1831.5 985V992" stroke="#f5e9a8"/>
<rect x="1876" y="984" width="3.5" height="9" fill="#f5e9a8"/>
</svg>
</body></html>
